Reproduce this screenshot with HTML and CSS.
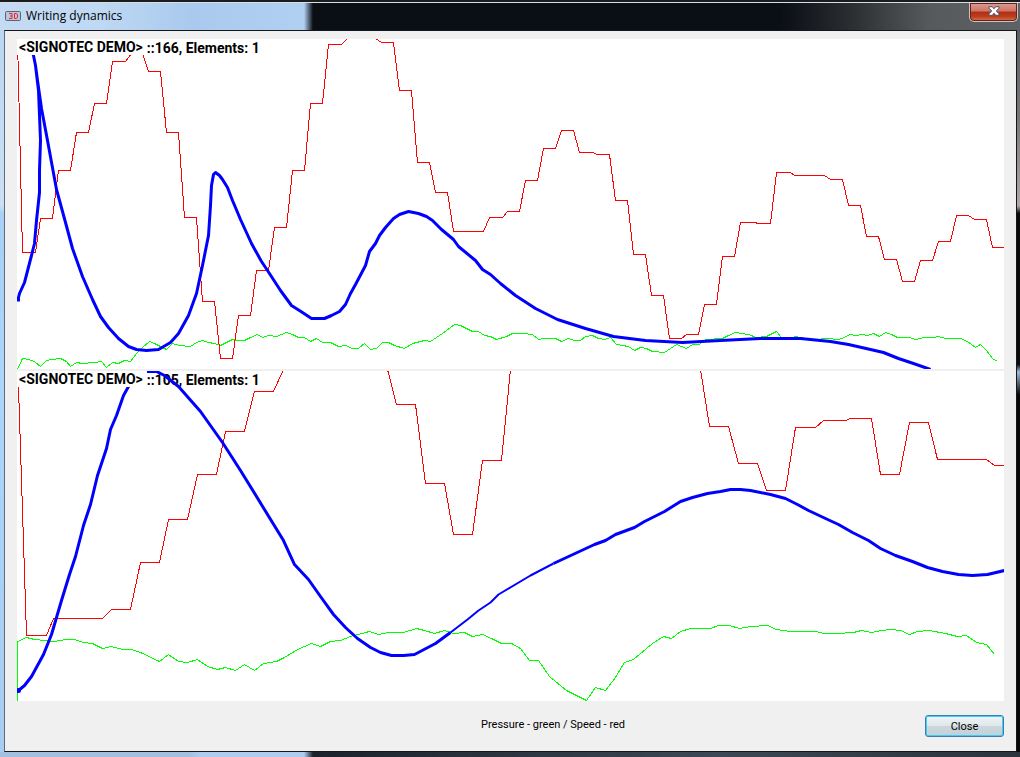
FILE: index.html
```
<!DOCTYPE html>
<html lang="en">
<head>
<meta charset="utf-8">
<title>Writing dynamics</title>
<link rel="stylesheet" href="styles.css">
</head>
<body>
<main class="window">
  <header class="titlebar">
    <svg class="app-icon" viewBox="0 0 16 10" aria-hidden="true">
      <rect x="0.5" y="0.5" width="15" height="9" rx="1" fill="#b4c8e0" stroke="#53657c"/>
      <path d="M4 2.500H7V7.500H4M5 5H7M9.500 2.500V7.500H11L12.500 6.500V3.500L11 2.500H9.500" fill="none" stroke="#ff1c1c"/>
    </svg>
    <h1 class="title">Writing dynamics</h1>
    <button class="window-close" type="button" aria-label="Close window">
      <svg viewBox="0 0 12 10" aria-hidden="true">
        <path d="M1 .7H4.300L6 2.800 7.700 .7H11V2.200L8.300 5 11 7.800V9.300H7.700L6 7.200 4.300 9.300H1V7.800L3.700 5 1 2.200Z" fill="#fff" stroke="#4b5568"/>
      </svg>
    </button>
  </header>
  <section class="client">
    <div class="charts">
      <section class="chart">
        <div class="label"><span class="name">&lt;SIGNOTEC DEMO&gt;</span><span class="info">::166, Elements: 1</span></div>
        <svg class="plot" viewBox="16.5 38.5 987 330" preserveAspectRatio="none" role="img" aria-label="Pressure and speed, 166 points">
          <polyline class="pressure" points="17,369 22,358 28,359 34,361 40,366 46,360 52,359 60,358 66,361 70,366 76,362 82,363 94,362 101,361 106,367 112,362 118,363 124,360 130,361 136,353 142,347 149,341 154,343 160,346 166,349 172,343 179,345 190,346 196,342 202,340 208,342 214,343 220,345 226,342 232,339 238,340 244,340 250,337 257,334 262,337 268,335 276,336 286,332 292,334 298,337 304,337 310,341 316,338 322,342 330,342 338,346 345,345 352,348 358,348 364,343 370,349 376,348 382,342 388,342 394,345 404,348 412,343 424,340 430,341 442,333 454,324 460,325 472,331 478,331 484,335 490,336 496,339 506,336 512,333 522,333 532,334 538,339 544,338 555,338 561,341 568,338 574,340 580,340 585,336 592,335 598,338 604,339 610,337 616,344 628,346 634,350 640,347 646,348 652,351 664,352 670,348 676,344 686,348 692,344 699,344 705,339 722,338 728,335 735,332 748,334 756,337 766,336 776,331 781,337 788,338 795,336 805,338 816,339 826,338 838,339 844,337 849,334 856,335 862,334 867,335 873,333 879,336 885,332 891,334 897,337 909,337 915,339 924,337 933,337 938,336 945,338 960,338 967,341 975,347 980,344 986,350 992,358 997,361"/>
          <polyline class="speed" points="17,39 18,80 22,252 35,252 40,218 52,218 58,170 70,170 76,132 88,132 94,103 106,103 112,61 125,61 131,53 142,53 148,71 160,71 166,132 178,132 184,217 196,217 202,301 214,301 220,358 232,358 238,315 250,315 256,270 268,270 274,227 286,227 292,170 304,170 310,103 322,103 328,44 341,44 347,38 375,38 381,42 393,42 399,90 411,90 417,162 429,162 435,192 447,192 453,231 483,231 489,217 502,217 507,211 519,211 525,180 537,180 543,148 555,148 561,130 573,130 579,152 592,152 597,154 609,154 615,200 627,200 633,254 645,254 651,295 663,295 669,338 681,338 686,334 698,334 704,304 716,304 722,256 734,256 740,222 755,222 757,223 770,223 776,172 790,172 794,175 824,175 830,179 842,179 848,205 860,205 866,236 878,236 884,259 896,259 902,281 914,281 920,260 932,260 938,241 950,241 956,215 968,215 974,219 986,219 992,247 1004,247"/>
          <polyline class="stroke" points="18,301 18,297 19,293 24,282 31,255 34,243 36,220 39,192 39,170 40,140 39,115 38,90 35,65 33,55 29,40 33,55 35,65 37,80 41,108 47,140 56,189 65,222 72,248 82,276 92,299 100,316 108,327 118,338 128,346 136,349 146,350 158,349 170,342 178,333 188,315 196,293 202,265 208,235 210,205 211,185 213,174 215,172 219,175 222,179 227,187 232,200 240,219 251,243 261,261 267,270 280,290 291,305 302,312 311,318 324,318 331,315 339,311 345,304 350,293 355,284 365,265 369,251 375,243 379,235 385,227 393,218 399,214 408,211 418,213 426,216 432,220 441,229 453,239 458,246 475,260 482,269 490,274 500,283 515,295 535,308 557,319 585,328 613,336 645,340 682,342 720,340 760,338 800,338 830,341 848,344 870,349 883,352 898,358 913,363 930,369"/>
        </svg>
      </section>
      <section class="chart">
        <div class="label"><span class="name">&lt;SIGNOTEC DEMO&gt;</span><span class="info">::105, Elements: 1</span></div>
        <svg class="plot" viewBox="16.5 370.5 987 330" preserveAspectRatio="none" role="img" aria-label="Pressure and speed, 105 points">
          <polyline class="pressure" points="17,701 17,641 26,637 34,639 54,641 66,639 74,639 83,642 92,643 102,648 111,646 122,649 131,649 140,652 159,661 168,654 178,661 187,662 197,659 207,666 217,669 225,667 235,670 244,664 254,670 263,663 276,661 284,657 297,649 311,643 320,646 330,641 340,640 350,636 369,631 378,634 388,632 403,632 416,628 424,630 434,633 444,630 453,633 464,632 472,636 482,634 491,638 501,643 511,643 520,648 529,660 538,660 549,676 566,690 586,700 595,687 605,690 615,677 624,662 633,659 652,643 663,636 671,638 680,631 690,628 710,628 718,625 729,625 739,628 750,626 767,625 776,629 790,631 815,631 824,633 837,633 853,632 861,630 871,632 881,630 891,629 900,630 909,634 917,631 929,630 945,633 957,636 966,635 976,642 986,644 994,654"/>
          <polyline class="speed" points="18,371 18,387 26,635 46,635 53,618 102,618 111,609 130,609 140,562 159,562 168,519 187,519 197,474 216,474 225,431 244,431 254,391 273,391 283,369 387,369 396,404 415,404 425,483 444,483 453,534 472,534 482,460 501,460 510,369 700,369 709,426 728,426 738,463 757,463 766,490 785,490 795,427 815,427 823,420 845,420 850,418 871,418 880,474 899,474 909,422 928,422 937,459 986,459 994,465 1004,465"/>
          <polyline class="stroke" points="18,690 24,685 31,676 37,665 43,654 51,634 56,617 61,600 69,574 75,556 83,525 90,504 97,475 106,448 110,429 116,415 123,395 128,386 140,371 156,371 164,375 178,386 200,411 222,442 240,470 283,540 294,564 308,579 320,596 333,614 345,627 357,638 370,647 380,652 391,655 403,655 414,654 435,643 450,632"/>
          <polyline class="stroke thin" points="450,632 467,619 478,610 490,602 498,594 530,575 553,563"/>
          <polyline class="stroke" points="553,563 594,544 605,540 615,534 634,527 644,521 664,511 672,506 680,501 692,497 707,493 720,491 730,489 740,489 750,490 770,494 785,498 797,504 808,510 825,518 838,524 852,532 868,540 880,548 895,555 912,561 927,567 942,571 958,574 972,575 987,574 1004,570"/>
          <circle class="start" cx="18" cy="690" r="2.500"/>
        </svg>
      </section>
    </div>
    <footer class="footer">
      <p class="legend">Pressure - green / Speed - red</p>
      <button class="close" type="button">Close</button>
    </footer>
  </section>
</main>
</body>
</html>
```
FILE: styles.css
```
* { box-sizing: border-box; }

body {
  margin: 0;
  background: #000;
}

.window {
  display: flex;
  flex-direction: column;
  min-height: 100vh;
  padding: 0 3px 5px 4px;
  border-top: 2px solid #1c1c1c;
  background:
    linear-gradient(90deg, #a3c0e0, #a3c0e0 190px, #aecdee 200px, #aecdee 304px, #1b222c 313px, #3d4956 70%, #2b343d) bottom / 100% 5px no-repeat,
    linear-gradient(#5c6063 4%, #777 15%, #b0a8a8 27%, #0b0b0b 28%, #0b0b0b 48%, #9ebbd8 49%, #080808 52%, #080808) right / 4px 100% no-repeat,
    linear-gradient(#b8d5f2, #cce0f5 27%, #a9cff6 28%, #aed4fb 50%, #a9cdf0) left / 4px 100% no-repeat,
    #0b0f16;
}

.titlebar {
  display: flex;
  align-items: center;
  gap: 5px;
  height: 28px;
  margin: 0 -3px 0 -4px;
  padding: 0 2px 1px 5px;
  border-top: 1px solid #d4dfea;
  background: linear-gradient(90deg, #c5dbf3, #bfd8f3 100px, #a9caee 190px, #b0d0f2 304px, #0a0e15 313px, #0a0e15 780px, #2a2e31 850px, #565a5d 930px, #5e6265);
}

.app-icon {
  width: 16px;
  height: 10px;
}

.title {
  flex: 1;
  margin: 0;
  font: 400 12px/16px "Open Sans", "Noto Sans", sans-serif;
  color: #000;
}

.window-close {
  align-self: flex-start;
  display: flex;
  align-items: center;
  justify-content: center;
  width: 49px;
  height: 19px;
  padding: 0 0 2px;
  border: 1px solid #c9c4c4;
  border-top: 0;
  border-radius: 0 0 5px 5px;
  background: linear-gradient(#dd9d92, #cd7465 45%, #b22c16 50%, #b8401f 75%, #d8744d);
  box-shadow: inset 0 0 0 1px #6a2018;
}

.window-close svg {
  width: 12px;
  height: 10px;
}

.client {
  flex: 1;
  display: flex;
  flex-direction: column;
  padding: 8px 12px 14px;
  border: 1px solid #15161c;
  border-left-color: #5a6c80;
  background: #f0f0f0;
}

.charts {
  flex: 1;
  display: grid;
  grid-template-rows: 1fr 1fr;
  gap: 2px;
}

.chart {
  display: grid;
  overflow: hidden;
  background: #fff;
}

.label {
  grid-area: 1 / 1;
  align-self: start;
  display: flex;
  height: 16px;
  font: 700 14px/16px Roboto, "Liberation Sans", Arial, sans-serif;
  color: #000;
  white-space: nowrap;
}

.name {
  position: relative;
  z-index: 2;
  padding: 0 4px 0 2px;
  background: #fff;
}

.info {
  line-height: 18px;
}

.plot {
  grid-area: 1 / 1;
  position: relative;
  z-index: 1;
  width: 100%;
  height: 100%;
  min-height: 0;
}

.pressure,
.speed {
  fill: none;
  stroke: #0f0;
  stroke-width: 1px;
  shape-rendering: crispEdges;
}

.speed { stroke: #f00; }

.stroke {
  fill: none;
  stroke: #00f;
  stroke-width: 3px;
  stroke-linejoin: round;
}

.thin { stroke-width: 2px; }

.start { fill: #00f; }

.footer {
  display: grid;
  grid-template-columns: 1fr 79px;
  align-items: center;
  padding-top: 14px;
}

.legend {
  margin: 0 0 4px 464px;
  font: 400 11px/13px Roboto, "Liberation Sans", Arial, sans-serif;
  color: #000;
}

.close {
  height: 22px;
  padding: 0;
  border: 1px solid #3a7fb0;
  border-radius: 3px;
  background: linear-gradient(#f0f4f6, #dfe7ea 48%, #ccd7dc 50%, #c2d0d6);
  box-shadow: inset 0 0 0 1px #3fcdf5;
  font: 400 11px/13px Roboto, "Liberation Sans", Arial, sans-serif;
  color: #000;
}
```
